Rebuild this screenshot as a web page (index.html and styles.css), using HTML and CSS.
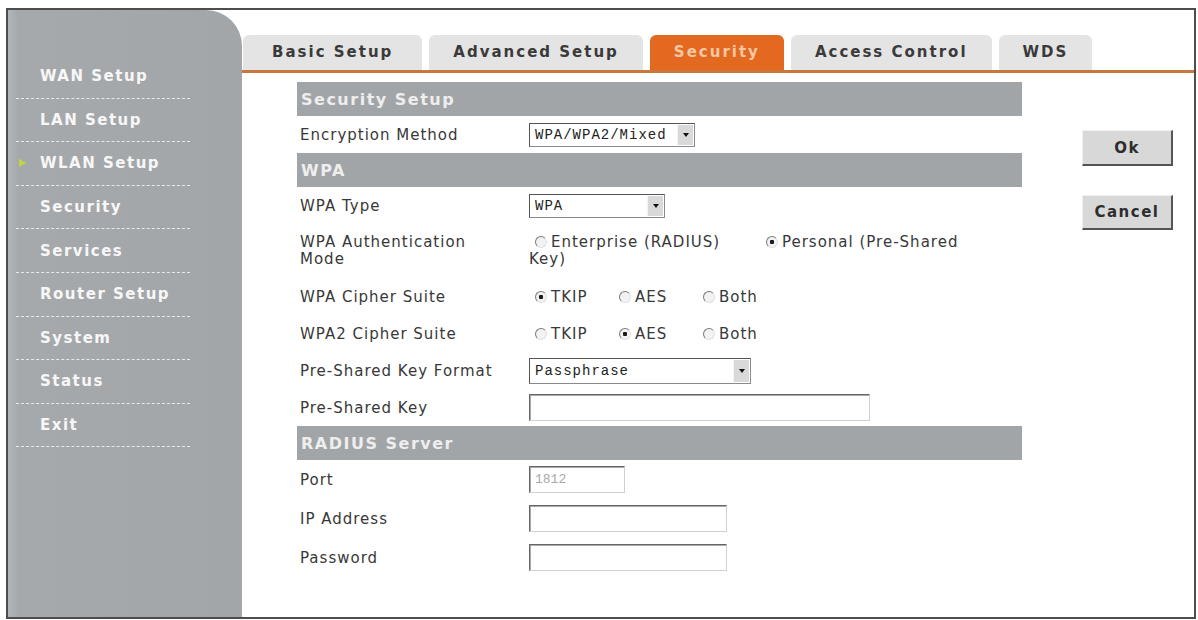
FILE: index.html
```html
<!DOCTYPE html>
<html lang="en">
<head>
    <meta charset="UTF-8">
    <meta name="viewport" content="width=device-width, initial-scale=1.0">
    <title>WLAN Setup - Security</title>
    <link rel="stylesheet" href="styles.css">
</head>
<body>
<div class="frame">
    <!-- Left menu -->
    <div class="sidebar">
        <ul class="nav">
            <li class="nav-item">WAN Setup</li>
            <li class="nav-item">LAN Setup</li>
            <li class="nav-item active">WLAN Setup</li>
            <li class="nav-item">Security</li>
            <li class="nav-item">Services</li>
            <li class="nav-item">Router Setup</li>
            <li class="nav-item">System</li>
            <li class="nav-item">Status</li>
            <li class="nav-item">Exit</li>
        </ul>
    </div>

    <div class="main">
        <ul class="tabs">
            <li class="tab">Basic Setup</li>
            <li class="tab">Advanced Setup</li>
            <li class="tab current">Security</li>
            <li class="tab">Access Control</li>
            <li class="tab">WDS</li>
        </ul>

        <div class="content">
            <table class="form-table">
                <colgroup>
                    <col class="col-label">
                    <col>
                </colgroup>
                <tr class="bar"><td colspan="2">Security Setup</td></tr>
                <tr>
                    <td class="label">Encryption Method</td>
                    <td>
                        <span class="select sel-enc"><select><option>WPA/WPA2/Mixed</option></select><span class="arrow"></span></span>
                    </td>
                </tr>

                <tr class="bar"><td colspan="2">WPA</td></tr>
                <tr>
                    <td class="label">WPA Type</td>
                    <td>
                        <span class="select sel-type"><select><option>WPA</option></select><span class="arrow"></span></span>
                    </td>
                </tr>
                <tr class="row-tall">
                    <td class="label">WPA Authentication<br>Mode</td>
                    <td class="auth">
                        <input type="radio" class="radio" name="auth">Enterprise (RADIUS)
                        <input type="radio" class="radio radio-gap" name="auth" checked>Personal (Pre-Shared<br>Key)
                    </td>
                </tr>
                <tr>
                    <td class="label">WPA Cipher Suite</td>
                    <td class="cipher">
                        <span class="opt"><input type="radio" class="radio" name="c1" checked>TKIP</span><span class="opt"><input type="radio" class="radio" name="c1">AES</span><span class="opt"><input type="radio" class="radio" name="c1">Both</span>
                    </td>
                </tr>
                <tr>
                    <td class="label">WPA2 Cipher Suite</td>
                    <td class="cipher">
                        <span class="opt"><input type="radio" class="radio" name="c2">TKIP</span><span class="opt"><input type="radio" class="radio" name="c2" checked>AES</span><span class="opt"><input type="radio" class="radio" name="c2">Both</span>
                    </td>
                </tr>
                <tr>
                    <td class="label">Pre-Shared Key Format</td>
                    <td>
                        <span class="select sel-format"><select><option>Passphrase</option></select><span class="arrow"></span></span>
                    </td>
                </tr>
                <tr>
                    <td class="label">Pre-Shared Key</td>
                    <td><input type="text" class="text in-key"></td>
                </tr>

                <tr class="bar"><td colspan="2">RADIUS Server</td></tr>
                <tr class="row-wide">
                    <td class="label">Port</td>
                    <td><input type="text" class="text in-port" value="1812" disabled></td>
                </tr>
                <tr class="row-wide">
                    <td class="label">IP Address</td>
                    <td><input type="text" class="text in-addr"></td>
                </tr>
                <tr class="row-wide">
                    <td class="label">Password</td>
                    <td><input type="password" class="text in-addr"></td>
                </tr>
            </table>

            <div class="actions">
                <button class="btn">Ok</button>
                <button class="btn btn-cancel">Cancel</button>
            </div>
        </div>
    </div>
</div>
</body>
</html>
```

FILE: styles.css
```css
body {
    margin: 0;
    background-color: #fff;
    font-family: "DejaVu Sans", Verdana, sans-serif;
    color: #383838;
}
.frame {
    display: flex;
    width: 1190px;
    height: 611px;
    margin: 8px 0 0 6px;
    border: 2px solid #4d4d4d;
    box-sizing: border-box;
}

/* left menu */
.sidebar {
    width: 234px;
    flex-shrink: 0;
    background: linear-gradient(to right, #b1b4b9, #a6a9ac 10px, #a3a6a9);
    border-top-right-radius: 36px;
}
.nav {
    list-style: none;
    margin: 0;
    padding: 45px 0 0 8px;
    width: 174px;
}
.nav-item {
    display: flex;
    align-items: center;
    height: 43.6px;
    box-sizing: border-box;
    border-bottom: 1px dashed rgba(255, 255, 255, 0.75);
    color: #f7f7f7;
    font-weight: bold;
    font-size: 15px;
    letter-spacing: 1.5px;
}
.nav-item::before {
    content: "";
    width: 0;
    height: 0;
    border-left: 7px solid transparent;
    border-top: 4px solid transparent;
    border-bottom: 4px solid transparent;
    margin: 0 14px 0 3px;
}
.nav-item.active::before {
    border-left-color: #c4d63e;
}

/* tabs */
.main {
    flex: 1;
}
.tabs {
    display: flex;
    gap: 7px;
    list-style: none;
    margin: 0;
    padding: 25px 0 0 1px;
    border-bottom: 3px solid #c9773c;
}
.tab {
    height: 35px;
    line-height: 35px;
    padding: 0 24px;
    background: #e4e4e4;
    border-radius: 6px 6px 0 0;
    font-weight: bold;
    font-size: 15px;
    letter-spacing: 2px;
    color: #3a3a3a;
}
.tab:first-child {
    padding: 0 29px;
}
.tab.current {
    background: #e2691f;
    color: #f8c6a2;
}

/* form */
.content {
    display: flex;
    align-items: flex-start;
    padding: 9px 0 0 55px;
}
.form-table {
    width: 725px;
    table-layout: fixed;
    border-collapse: collapse;
    font-size: 15px;
    letter-spacing: 1px;
}
.col-label {
    width: 232px;
}
.form-table td {
    padding: 0;
    height: 37px;
    vertical-align: middle;
}
.form-table .label {
    padding: 0 6px 0 3px;
}
.bar td {
    height: 34px;
    padding-left: 4px;
    background: #a2a5a8;
    color: #eeeeee;
    font-weight: bold;
    font-size: 16px;
    letter-spacing: 1.5px;
}
.row-tall td {
    height: 54px;
    line-height: 17px;
}
.row-wide td {
    height: 39px;
}

.select {
    display: inline-flex;
    height: 24px;
    box-sizing: border-box;
    border: 1px solid #555;
    border-right-color: #8a8a8a;
    border-bottom-color: #8a8a8a;
    background: #fff;
    vertical-align: middle;
}
.select select {
    flex: 1;
    min-width: 0;
    appearance: none;
    border: 0;
    outline: none;
    background: transparent;
    padding: 0 0 0 5px;
    font-family: "Liberation Mono", monospace;
    font-size: 14px;
    letter-spacing: 1px;
    color: #222;
}
.select .arrow {
    display: flex;
    align-items: center;
    justify-content: center;
    width: 15px;
    margin: 1px;
    background: #d9d9d9;
    border-left: 1px solid #f4f4f4;
}
.select .arrow::after {
    content: "";
    border-top: 4px solid #111;
    border-left: 3px solid transparent;
    border-right: 3px solid transparent;
}
.sel-enc {
    width: 166px;
}
.sel-type {
    width: 136px;
}
.sel-format {
    width: 222px;
    height: 26px;
}

.text {
    box-sizing: border-box;
    height: 27px;
    padding: 0 5px;
    border: 1px solid;
    border-color: #666 #d0d0d0 #d0d0d0 #666;
    box-shadow: inset 1px 1px 0 #aaa;
    font-family: "Liberation Mono", monospace;
    font-size: 13px;
    vertical-align: middle;
}
.text:disabled {
    background: #fff;
    color: #a8a8a8;
}
.in-key {
    width: 341px;
}
.in-port {
    width: 96px;
}
.in-addr {
    width: 198px;
}

.radio {
    appearance: none;
    width: 12px;
    height: 12px;
    margin: 0 4px 0 6px;
    border-radius: 50%;
    border: 1px solid;
    border-color: #7a7a7a #e0e0e0 #e0e0e0 #7a7a7a;
    background: #f2f2f2;
    vertical-align: -1px;
}
.radio:checked {
    background: radial-gradient(circle, #1a1a1a 0 2px, #f2f2f2 2.5px);
}
.radio-gap {
    margin-left: 40px;
}
.opt {
    display: inline-block;
}
.cipher .opt {
    width: 84px;
}

/* buttons */
.actions {
    display: flex;
    flex-direction: column;
    gap: 29px;
    margin: 48px 0 0 60px;
}
.btn {
    width: 91px;
    height: 36px;
    padding: 0;
    background: #d8d8d8;
    border-style: solid;
    border-width: 1px 2px 2px 1px;
    border-color: #f0f0f0 #555 #555 #f0f0f0;
    font-family: "DejaVu Sans", sans-serif;
    font-weight: bold;
    font-size: 15px;
    letter-spacing: 1.5px;
    color: #2d2d2d;
}
.btn-cancel {
    height: 35px;
}
```
